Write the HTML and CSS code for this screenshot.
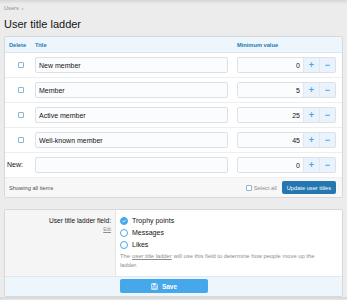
FILE: index.html
```html
<!DOCTYPE html>
<html lang="en">
<head>
    <meta charset="UTF-8">
    <meta name="viewport" content="width=device-width, initial-scale=1.0">
    <title>User title ladder</title>
    <link rel="stylesheet" href="styles.css">
</head>
<body>
    <div class="page">
        <div class="breadcrumb">Users <span class="sep">›</span></div>
        <h1>User title ladder</h1>

        <div class="block ladder">
            <div class="row head">
                <div class="c-del">Delete</div>
                <div class="c-title">Title</div>
                <div class="c-min">Minimum value</div>
            </div>
            <div class="row">
                <div class="c-del"><input type="checkbox" class="check"></div>
                <div class="c-title"><input type="text" class="input" value="New member"></div>
                <div class="c-min">
                    <div class="spin"><input type="text" class="input num" value="0"><span class="spin-btn">+</span><span class="spin-btn">−</span></div>
                </div>
            </div>
            <div class="row">
                <div class="c-del"><input type="checkbox" class="check"></div>
                <div class="c-title"><input type="text" class="input" value="Member"></div>
                <div class="c-min">
                    <div class="spin"><input type="text" class="input num" value="5"><span class="spin-btn">+</span><span class="spin-btn">−</span></div>
                </div>
            </div>
            <div class="row">
                <div class="c-del"><input type="checkbox" class="check"></div>
                <div class="c-title"><input type="text" class="input" value="Active member"></div>
                <div class="c-min">
                    <div class="spin"><input type="text" class="input num" value="25"><span class="spin-btn">+</span><span class="spin-btn">−</span></div>
                </div>
            </div>
            <div class="row">
                <div class="c-del"><input type="checkbox" class="check"></div>
                <div class="c-title"><input type="text" class="input" value="Well-known member"></div>
                <div class="c-min">
                    <div class="spin"><input type="text" class="input num" value="45"><span class="spin-btn">+</span><span class="spin-btn">−</span></div>
                </div>
            </div>
            <div class="row">
                <div class="c-del new-label">New:</div>
                <div class="c-title"><input type="text" class="input" value=""></div>
                <div class="c-min">
                    <div class="spin"><input type="text" class="input num" value="0"><span class="spin-btn">+</span><span class="spin-btn">−</span></div>
                </div>
            </div>
            <div class="block-footer">
                <span class="showing">Showing all items</span>
                <label class="select-all"><input type="checkbox" class="check">Select all</label>
                <button class="btn btn-dark">Update user titles</button>
            </div>
        </div>

        <div class="block options">
            <div class="form-row">
                <div class="form-label">
                    <div>User title ladder field:</div>
                    <a class="edit" href="#">Edit</a>
                </div>
                <div class="form-value">
                    <label class="radio">
                        <span class="radio-mark checked">
                            <svg viewBox="0 0 8 8" width="8" height="8"><path d="M2.2 4.1 L3.5 5.4 L5.9 2.8" fill="none" stroke="#fff" stroke-width="1.1" stroke-linecap="round" stroke-linejoin="round"/></svg>
                        </span>Trophy points
                    </label>
                    <label class="radio"><span class="radio-mark"></span>Messages</label>
                    <label class="radio"><span class="radio-mark"></span>Likes</label>
                    <p class="explain">The <a href="#">user title ladder</a> will use this field to determine how people move up the ladder.</p>
                </div>
            </div>
            <div class="form-footer">
                <button class="btn btn-save">
                    <svg viewBox="0 0 10 10" width="7" height="7"><path d="M1 1 H7.5 L9 2.5 V9 H1 Z" fill="none" stroke="#fff" stroke-width="1.1"/><rect x="3" y="1" width="3.5" height="2.5" fill="#fff"/><rect x="2.8" y="5.5" width="4.4" height="3" fill="none" stroke="#fff" stroke-width="0.9"/></svg>
                    Save
                </button>
            </div>
        </div>
    </div>
</body>
</html>
```

FILE: styles.css
```css
body {
    margin: 0;
    font-family: "Liberation Sans", Arial, sans-serif;
    background: linear-gradient(#d6d6d6, #ececec 4px);
    background-color: #ececec;
    color: #141414;
}
.page {
    padding: 0 4px;
}
.breadcrumb {
    padding-top: 4px;
    font-size: 5.7px;
    line-height: 8px;
    color: #8c8c8c;
}
.breadcrumb .sep {
    margin-left: 1px;
}
h1 {
    margin: 6px 0 6px;
    font-size: 11px;
    line-height: 12px;
    font-weight: normal;
}
.block {
    background: white;
    border: 1px solid #d8d8d8;
    border-radius: 2px;
}
.row {
    display: grid;
    grid-template-columns: 30px 1fr 99px;
    align-items: center;
    height: 16px;
    padding: 4px 6px 4px 0;
    border-bottom: 1px solid #eeeeee;
    font-size: 7px;
    line-height: 8px;
}
.row.head {
    height: 15px;
    padding: 0 6px 0 0;
    background: #edf6fd;
    border-bottom: 1px solid #dfe8ef;
    font-size: 5.7px;
    font-weight: bold;
    color: #2577b1;
}
.c-del {
    display: flex;
    justify-content: center;
    padding: 0 3px 0 4px;
}
.head .c-del {
    justify-content: flex-start;
}
.c-title {
    padding-right: 9px;
}
.new-label {
    justify-content: flex-start;
    font-size: 7px;
    color: #141414;
    padding-left: 2px;
}
.input {
    display: block;
    box-sizing: border-box;
    width: 100%;
    height: 16px;
    margin: 0;
    padding: 0 3px;
    border: 1px solid #dbe1e6;
    border-radius: 2px;
    background: #fbfcfe;
    font-family: inherit;
    font-size: 7px;
    color: #141414;
}
.check {
    appearance: none;
    display: inline-block;
    width: 6px;
    height: 6px;
    margin: 0;
    border: 1px solid #8ab4d4;
    border-radius: 1px;
    background: white;
    vertical-align: middle;
}
.spin {
    display: flex;
    height: 16px;
    border: 1px solid #dbe1e6;
    border-radius: 2px;
    box-sizing: border-box;
    overflow: hidden;
}
.spin .num {
    flex: 1;
    height: 14px;
    border: none;
    border-radius: 0;
    text-align: right;
    padding-right: 3px;
}
.spin-btn {
    width: 15px;
    background: #eaf3fb;
    border-left: 1px solid #dde8f1;
    color: #47a7eb;
    font-size: 9px;
    font-weight: bold;
    line-height: 14px;
    text-align: center;
}
.block-footer {
    display: flex;
    align-items: center;
    height: 19px;
    padding: 0 6px 0 4px;
    background: #f7f7f7;
    font-size: 5.7px;
    color: #505050;
}
.showing {
    flex: 1;
}
.select-all {
    display: flex;
    align-items: center;
    gap: 2px;
    margin-right: 5px;
    color: #8c8c8c;
}
.btn {
    border: none;
    border-radius: 2px;
    font-family: inherit;
    color: white;
    cursor: pointer;
}
.btn-dark {
    height: 13px;
    padding: 0 5px;
    background: #2577b1;
    font-size: 5.7px;
}
.options {
    margin-top: 11px;
}
.form-row {
    display: flex;
}
.form-label {
    width: 106px;
    padding: 5px 4px 0 0;
    background: #f5f5f5;
    border-right: 1px solid #e4e4e4;
    text-align: right;
    font-size: 6.6px;
    line-height: 12px;
}
.edit {
    display: block;
    font-size: 4.5px;
    line-height: 5px;
    color: #8c8c8c;
}
.form-value {
    flex: 1;
    padding: 5px 4px 6px 4px;
}
.radio {
    display: flex;
    align-items: center;
    gap: 4px;
    font-size: 7px;
    line-height: 12px;
}
.radio-mark {
    display: inline-flex;
    align-items: center;
    justify-content: center;
    box-sizing: border-box;
    width: 8px;
    height: 8px;
    border: 1px solid #47a7eb;
    border-radius: 50%;
    background: white;
}
.radio-mark.checked {
    background: #47a7eb;
}
.radio-mark svg {
    display: block;
}
.explain {
    max-width: 206px;
    margin: 1px 0 0;
    font-size: 5.8px;
    line-height: 9px;
    color: #8c8c8c;
}
.explain a {
    margin: 0 0.5px;
    color: #8c8c8c;
}
.form-footer {
    padding: 2px 4px 3px 115px;
    background: #edf6fd;
    border-top: 1px solid #dfe8ef;
}
.btn-save {
    display: flex;
    align-items: center;
    justify-content: center;
    gap: 4px;
    width: 88px;
    height: 14px;
    background: #47a7eb;
    font-size: 6.5px;
    font-weight: bold;
}
```
